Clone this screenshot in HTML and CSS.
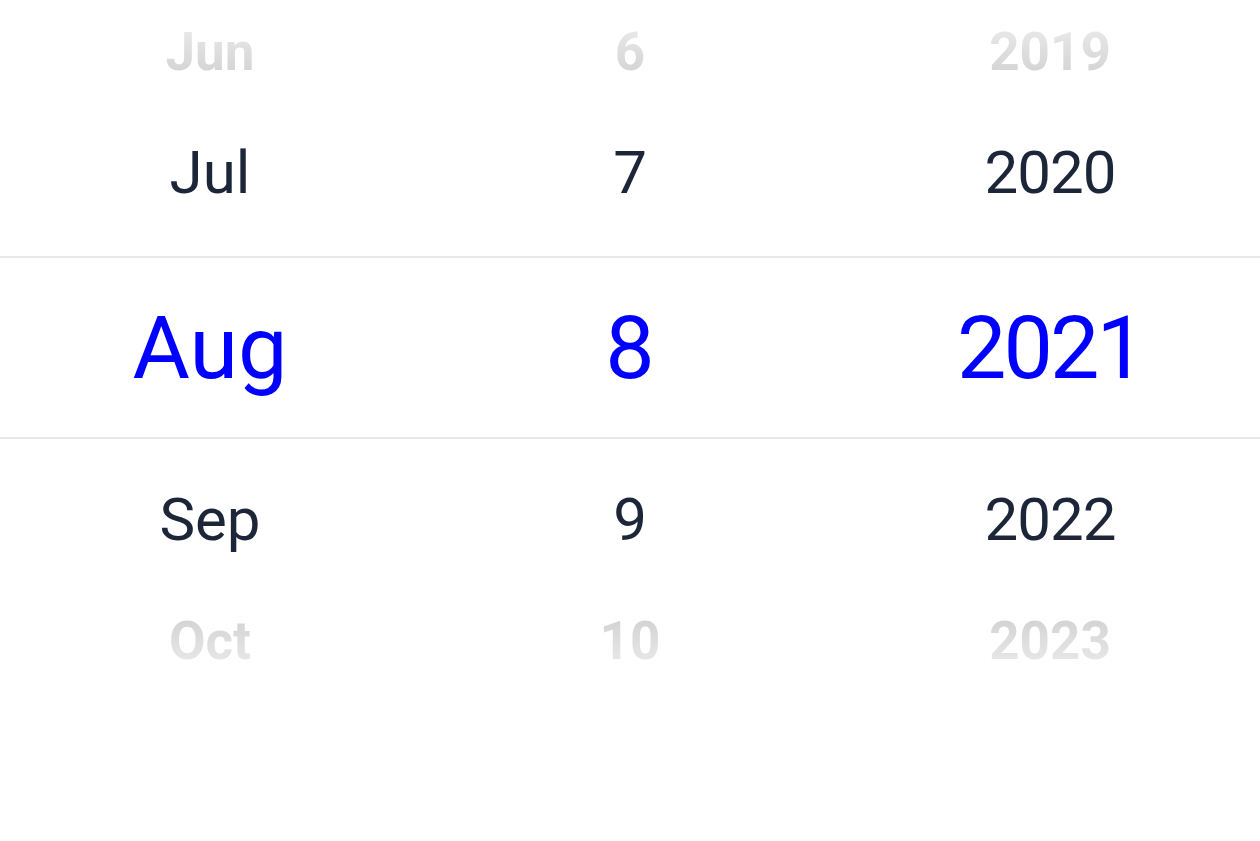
FILE: index.html
```html
<!DOCTYPE html>
<html>
<head>
  <title>Date Picker</title>
  <link rel="stylesheet" href="styles.css">
</head>
<body>

<div class="picker">
  <div class="row far far-top">
    <span>Jun</span><span>6</span><span class="year">2019</span>
  </div>
  <div class="row near near-top">
    <span>Jul</span><span>7</span><span class="year">2020</span>
  </div>
  <div class="row selected">
    <span>Aug</span><span>8</span><span class="year">2021</span>
  </div>
  <div class="row near near-bottom">
    <span>Sep</span><span>9</span><span class="year">2022</span>
  </div>
  <div class="row far far-bottom">
    <span>Oct</span><span>10</span><span class="year">2023</span>
  </div>
</div>

</body>
</html>
```

FILE: styles.css
```css
body { margin: 0; background: #fff; font-family: Roboto, "Noto Sans", sans-serif; }

.picker { display: flex; flex-direction: column; width: 1260px; }

.row { display: grid; grid-template-columns: repeat(3, 1fr); align-items: center; justify-items: center; }

.near { color: #1c2638; font-size: 60px; }
.near .year { letter-spacing: -1px; }
.near-top { height: 136px; margin-bottom: 16px; }
.near-bottom { height: 160px; }

.selected {
  height: 179px;
  border-top: 2px solid #e8e8e8;
  border-bottom: 2px solid #e8e8e8;
  color: #0000ff;
  font-size: 88px;
}
.selected .year { letter-spacing: -3px; }

.far { font-size: 53px; font-weight: 700; filter: blur(0.5px); }
.far span {
  color: transparent;
  -webkit-background-clip: text;
  background-clip: text;
}
.far-top { height: 104px; }
.far-top span { background-image: linear-gradient(to bottom, #ececec, #cfcfcf); }
.far-bottom { height: 83px; }
.far-bottom span { background-image: linear-gradient(to bottom, #cfcfcf, #ececec); }
```
